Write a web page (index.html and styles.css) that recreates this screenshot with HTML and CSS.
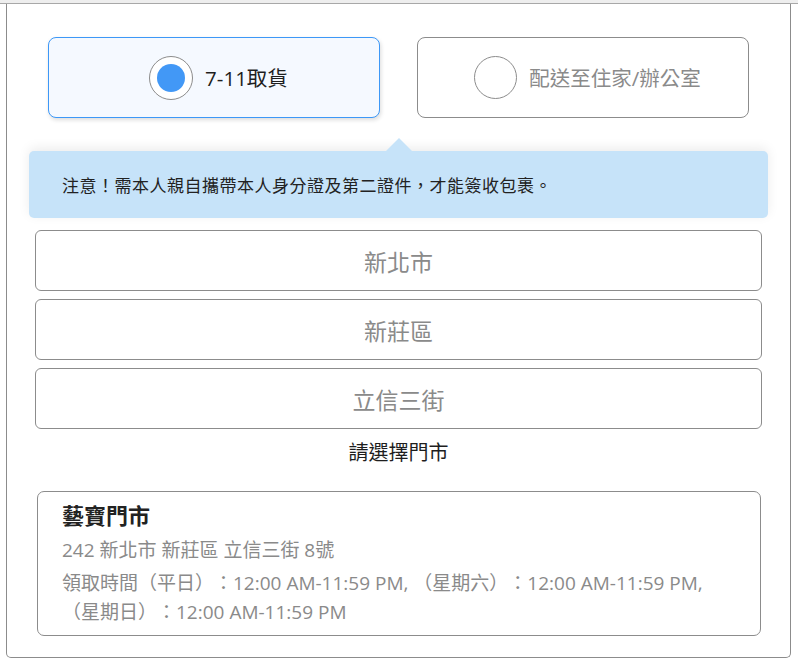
FILE: index.html
```html
<!DOCTYPE html>
<html lang="zh-Hant">
<head>
<meta charset="utf-8">
<title>取貨方式</title>
<link rel="stylesheet" href="styles.css">
</head>
<body>
<div class="panel">
  <div class="panel-top"></div>
  <div class="tabs">
    <div class="tab tab-active">
      <span class="radio radio-on"><span class="radio-dot"></span></span>
      <span class="tab-label">7-11取貨</span>
    </div>
    <div class="tab">
      <span class="radio"></span>
      <span class="tab-label tab-label-muted">配送至住家/辦公室</span>
    </div>
  </div>
  <div class="notice">注意！需本人親自攜帶本人身分證及第二證件，才能簽收包裹。</div>
  <div class="selects">
    <div class="select">新北市</div>
    <div class="select">新莊區</div>
    <div class="select">立信三街</div>
  </div>
  <div class="choose">請選擇門市</div>
  <div class="store">
    <div class="store-name">藝寶門市</div>
    <div class="store-addr">242 新北市 新莊區 立信三街 8號</div>
    <div class="store-hours">領取時間（平日）：12:00 AM-11:59 PM, （星期六）：12:00 AM-11:59 PM, （星期日）：12:00 AM-11:59 PM</div>
  </div>
</div>
</body>
</html>
```
FILE: styles.css
```css
html, body {
  margin: 0;
  padding: 0;
  background: #ffffff;
}
body {
  font-family: "Open Sans", "Noto Sans CJK TC", sans-serif;
  color: #222222;
  text-spacing-trim: space-all;
}
.panel {
  margin-left: 6px;
  width: 785px;
  height: 658px;
  box-sizing: border-box;
  border: 1px solid #8c8c8c;
  border-top: none;
  border-radius: 0 0 5px 5px;
  padding-bottom: 20px;
}
.panel-top {
  height: 3px;
  margin: 0 -8px;
  background: #eeeeee;
  border-bottom: 1px solid #a8a8a8;
}
.tabs {
  display: flex;
  gap: 37px;
  padding: 0 40px 0 41px;
  margin-top: 33px;
}
.tab {
  width: 332px;
  height: 81px;
  box-sizing: border-box;
  border: 1px solid #8c8c8c;
  border-radius: 8px;
  padding-left: 9px;
  display: flex;
  align-items: center;
  justify-content: center;
  gap: 12px;
  background: #ffffff;
}
.tab-active {
  border-color: #3d98f7;
  background: #f5f9ff;
  box-shadow: 1px 2px 4px rgba(0, 0, 0, 0.14);
}
.radio {
  width: 43px;
  height: 43px;
  box-sizing: border-box;
  border: 1.5px solid #8c8c8c;
  border-radius: 50%;
  background: #ffffff;
  display: flex;
  align-items: center;
  justify-content: center;
}
.radio-on {
  width: 44px;
  height: 44px;
}
.radio-dot {
  width: 28px;
  height: 28px;
  border-radius: 50%;
  background: #4298f6;
}
.tab-label {
  font-size: 20.5px;
  line-height: 28px;
  color: #1e1e1e;
}
.tab-label-muted {
  color: #8a8a8a;
}
.notice {
  position: relative;
  margin: 33px 22px 0 22px;
  height: 67px;
  box-sizing: border-box;
  padding-left: 33px;
  display: flex;
  align-items: center;
  background: #c6e3f9;
  border-radius: 5px;
  box-shadow: 0 -3px 12px rgba(0, 0, 0, 0.08);
  font-size: 17px;
  letter-spacing: 0.5px;
  color: #222222;
}
.notice::before {
  content: "";
  position: absolute;
  top: -13px;
  left: 50%;
  margin-left: -13px;
  border-left: 13px solid transparent;
  border-right: 13px solid transparent;
  border-bottom: 13px solid #c6e3f9;
}
.selects {
  display: flex;
  flex-direction: column;
  gap: 8px;
  margin: 12px 28px 0 28px;
}
.select {
  height: 61px;
  box-sizing: border-box;
  border: 1px solid #8c8c8c;
  border-radius: 6px;
  display: flex;
  align-items: center;
  justify-content: center;
  font-size: 23px;
  color: #8a8a8a;
}
.choose {
  margin-top: 10px;
  text-align: center;
  font-size: 20px;
  line-height: 28px;
  color: #1e1e1e;
}
.store {
  margin: 24px 29px 0 30px;
  height: 145px;
  box-sizing: border-box;
  border: 1px solid #8c8c8c;
  border-radius: 7px;
  padding: 9px 24px 9px 24px;
}
.store-name {
  font-size: 22px;
  font-weight: 700;
  line-height: 28px;
  color: #222222;
}
.store-addr {
  margin-top: 7px;
  font-size: 19px;
  line-height: 28px;
  color: #8a8a8a;
}
.store-hours {
  margin-top: 5px;
  font-size: 19px;
  line-height: 29px;
  color: #8a8a8a;
}
```
